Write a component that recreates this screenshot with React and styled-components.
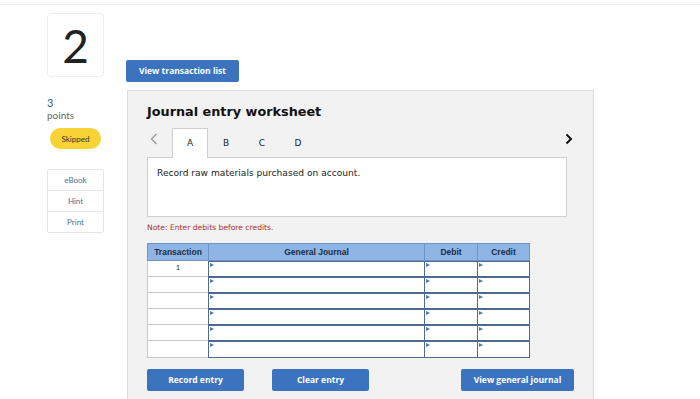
import styled, { createGlobalStyle } from "styled-components";

const GlobalStyle = createGlobalStyle`
  html, body { margin: 0; padding: 0; background: #fff; }
  body { font-family: "Liberation Sans", Arial, sans-serif; overflow: hidden; }
`;

const Page = styled.div`
  width: 700px;
  height: 399px;
  border-top: 1px solid #ececec;
  margin-top: 4px;
  display: flex;
  box-sizing: border-box;
`;

const Side = styled.div`
  width: 57px;
  margin-left: 47px;
  padding-top: 8px;
  display: flex;
  flex-direction: column;
`;

const NumberBox = styled.div`
  height: 64px;
  border: 1px solid #efefef;
  border-radius: 4px;
  box-sizing: border-box;
  display: flex;
  align-items: center;
  justify-content: center;
  font-family: "Lato", sans-serif;
  font-size: 46px;
  font-weight: 400;
  color: #222;
`;

const Points = styled.div`
  margin-top: 20px;
  font-family: "Lato", sans-serif;
  font-size: 10px;
  line-height: 12px;
  color: #666;
  & b { display: block; font-weight: 400; font-size: 11px; color: #2f5fa4; }
`;

const Pill = styled.div`
  margin: 7px 0 0 3px;
  width: 51px;
  height: 21px;
  border-radius: 11px;
  background: #f7d336;
  display: flex;
  align-items: center;
  justify-content: center;
  font-family: "Lato", sans-serif;
  font-size: 8px;
  color: #333;
`;

const Tools = styled.div`
  margin-top: 20px;
  border: 1px solid #e6e6e6;
  border-radius: 2px;
`;

const Tool = styled.div`
  height: 20px;
  display: flex;
  align-items: center;
  justify-content: center;
  font-family: "Lato", sans-serif;
  font-size: 8px;
  color: #4f6f99;
  & + & { border-top: 1px solid #e6e6e6; }
`;

const Main = styled.div`
  margin-left: 22px;
  padding-top: 55px;
  display: flex;
  flex-direction: column;
  align-items: flex-start;
`;

const Button = styled.button`
  height: 22px;
  width: ${(p) => p.$w}px;
  border: none;
  border-radius: 2px;
  background: #3b73bf;
  color: #fff;
  font-family: "Open Sans", sans-serif;
  font-weight: 700;
  font-size: 8.5px;
  padding: 0;
  cursor: pointer;
`;

const Panel = styled.div`
  margin-top: 8px;
  margin-left: 1px;
  width: 467px;
  height: 320px;
  background: #f2f2f2;
  border: 1px solid #dcdcdc;
  box-sizing: border-box;
  padding: 11px 0 0 19px;
  display: flex;
  flex-direction: column;
`;

const Title = styled.h2`
  margin: 0;
  font-family: "DejaVu Sans", Verdana, sans-serif;
  font-size: 12.8px;
  font-weight: 700;
  color: #111;
  line-height: 20px;
`;

const TabRow = styled.div`
  margin-top: 6px;
  width: 426px;
  height: 29px;
  display: flex;
  align-items: stretch;
`;

const Arrow = styled.span`
  width: 25px;
  display: flex;
  align-items: flex-start;
  justify-content: ${(p) => (p.$end ? "flex-end" : "flex-start")};
  padding: 5px 0 0 3px;
  box-sizing: border-box;
  svg { display: block; }
`;

const Tab = styled.div`
  width: 36px;
  display: flex;
  align-items: center;
  justify-content: center;
  font-family: "DejaVu Sans", Verdana, sans-serif;
  font-size: 9px;
  color: #222;
  box-sizing: border-box;
  background: ${(p) => (p.$active ? "#fff" : "transparent")};
  border: 1px solid ${(p) => (p.$active ? "#cfcfcf" : "transparent")};
  border-bottom: none;
  margin-bottom: -1px;
  position: relative;
  z-index: 1;
`;

const Spacer = styled.div`
  flex: 1;
`;

const Content = styled.div`
  width: 420px;
  height: 60px;
  box-sizing: border-box;
  background: #fff;
  border: 1px solid #cfcfcf;
  padding: 10px 9px;
  font-family: "DejaVu Sans", Verdana, sans-serif;
  font-size: 9.1px;
  color: #222;
`;

const Note = styled.div`
  margin-top: 6px;
  font-family: "DejaVu Sans", Verdana, sans-serif;
  font-size: 7.6px;
  color: #a8322d;
`;

const Grid = styled.div`
  margin-top: 11px;
  display: grid;
  grid-template-columns: 62px 216px 53px 52px;
  grid-template-rows: 18px;
  grid-auto-rows: 16.2px;
  width: 383px;
`;

const Head = styled.div`
  background: #8fb5e5;
  border: 1px solid #6e93c4;
  margin: 0 0 0 -1px;
  box-sizing: border-box;
  display: flex;
  align-items: center;
  justify-content: center;
  font-family: "Liberation Sans", Arial, sans-serif;
  font-weight: 700;
  font-size: 8.5px;
  color: #1d2c44;
  &:first-child { margin-left: 0; }
`;

const TxCell = styled.div`
  background: #fff;
  border: 1px solid #c9c9c9;
  border-top: none;
  box-sizing: border-box;
  display: flex;
  justify-content: center;
  padding-top: 2px;
  font-size: 8px;
  color: #333;
`;

const InCell = styled.div`
  background: #fff;
  border: 1.5px solid #4d6a91;
  margin: 0 0 0 -1px;
  box-sizing: border-box;
  position: relative;
  &::before {
    content: "";
    position: absolute;
    left: 1px;
    top: 1px;
    border-left: 4px solid #4d79b5;
    border-top: 2px solid transparent;
    border-bottom: 2px solid transparent;
  }
`;

const Actions = styled.div`
  margin-top: 11px;
  width: 427px;
  display: flex;
  gap: 28px;
  & > :last-child { margin-left: auto; }
`;

const cols = ["Transaction", "General Journal", "Debit", "Credit"];
const rows = [1, 2, 3, 4, 5, 6];

export default function App() {
  return (
    <>
      <GlobalStyle />
      <Page>
        <Side>
          <NumberBox>2</NumberBox>
          <Points>
            <b>3</b>points
          </Points>
          <Pill>Skipped</Pill>
          <Tools>
            <Tool>eBook</Tool>
            <Tool>Hint</Tool>
            <Tool>Print</Tool>
          </Tools>
        </Side>
        <Main>
          <Button $w={113}>View transaction list</Button>
          <Panel>
            <Title>Journal entry worksheet</Title>
            <TabRow>
              <Arrow>
                <svg width="8" height="12" viewBox="0 0 8 12">
                  <polyline points="6.5,1 1.5,6 6.5,11" fill="none" stroke="#9a9a9a" strokeWidth="1.4" />
                </svg>
              </Arrow>
              <Tab $active>A</Tab>
              <Tab>B</Tab>
              <Tab>C</Tab>
              <Tab>D</Tab>
              <Spacer />
              <Arrow $end>
                <svg width="8" height="12" viewBox="0 0 8 12">
                  <polyline points="1.5,1.5 6,6 1.5,10.5" fill="none" stroke="#111" strokeWidth="2" />
                </svg>
              </Arrow>
            </TabRow>
            <Content>Record raw materials purchased on account.</Content>
            <Note>Note: Enter debits before credits.</Note>
            <Grid>
              {cols.map((c) => (
                <Head key={c}>{c}</Head>
              ))}
              {rows.map((r) => [
                <TxCell key={"t" + r}>{r === 1 ? "1" : ""}</TxCell>,
                <InCell key={"g" + r} />,
                <InCell key={"d" + r} />,
                <InCell key={"c" + r} />,
              ])}
            </Grid>
            <Actions>
              <Button $w={97}>Record entry</Button>
              <Button $w={97}>Clear entry</Button>
              <Button $w={113}>View general journal</Button>
            </Actions>
          </Panel>
        </Main>
      </Page>
    </>
  );
}
